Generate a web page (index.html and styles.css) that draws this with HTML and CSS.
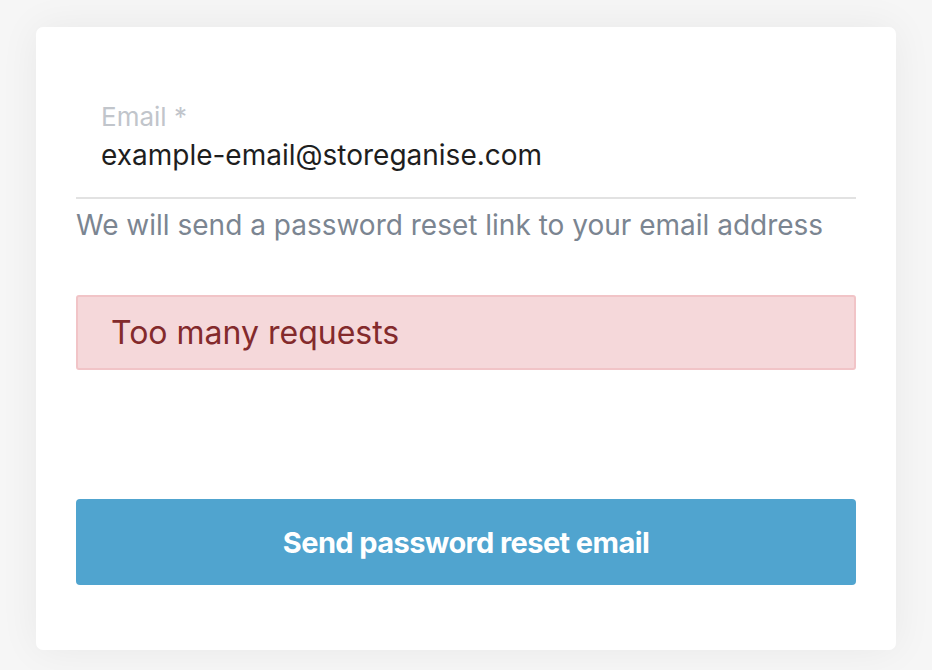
FILE: index.html
```html
<!DOCTYPE html>
<html lang="en">
<head>
    <meta charset="UTF-8">
    <meta name="viewport" content="width=device-width, initial-scale=1.0">
    <title>Reset password</title>
    <link rel="stylesheet" href="styles.css">
</head>
<body>
    <main class="card">
        <form class="reset-form">
            <div class="field">
                <label for="email" class="field-label">Email *</label>
                <input type="email" id="email" class="field-input" value="example-email@storeganise.com">
            </div>
            <p class="field-help">We will send a password reset link to your email address</p>

            <div class="alert alert-error">Too many requests</div>

            <button type="submit" class="button">Send password reset email</button>
        </form>
    </main>
</body>
</html>
```

FILE: styles.css
```css
/* Page */
body {
    margin: 0;
    padding: 27px 36px 20px;
    background-color: #f6f6f6;
    font-family: 'Inter', 'Noto Sans', sans-serif;
}

.card {
    background-color: #ffffff;
    border-radius: 7px;
    box-shadow: 0 0 40px rgba(0, 0, 0, 0.06);
    padding: 0 40px;
    height: 623px;
    box-sizing: border-box;
}

.reset-form {
    padding-top: 74px;
}

/* Text field */
.field {
    border-bottom: 2px solid #e2e2e2;
    padding: 0 25px 24px;
}

.field-label {
    display: block;
    color: #c1c5cb;
    font-size: 26px;
    line-height: 32px;
}

.field-input {
    display: block;
    width: 100%;
    border: none;
    padding: 0;
    margin-top: 4px;
    font-family: inherit;
    font-size: 28px;
    line-height: 36px;
    height: 36px;
    color: #1e1e1e;
    outline: none;
    background: transparent;
}

.field-help {
    margin: 8px 0 0;
    color: #7b8591;
    font-size: 28px;
    line-height: 36px;
}

/* Alert */
.alert {
    margin-top: 52px;
    height: 75px;
    box-sizing: border-box;
    display: flex;
    align-items: center;
    padding: 0 33px;
    border-radius: 3px;
    font-size: 32px;
}

.alert-error {
    background-color: #f5d8da;
    border: 2px solid #f1c4c7;
    color: #832a2c;
}

/* Button */
.button {
    display: block;
    width: 100%;
    height: 86px;
    margin-top: 129px;
    border: none;
    border-radius: 4px;
    background-color: #50a4cf;
    color: #ffffff;
    font-family: inherit;
    font-size: 29px;
    font-weight: 700;
    letter-spacing: -0.6px;
    cursor: pointer;
}
```
